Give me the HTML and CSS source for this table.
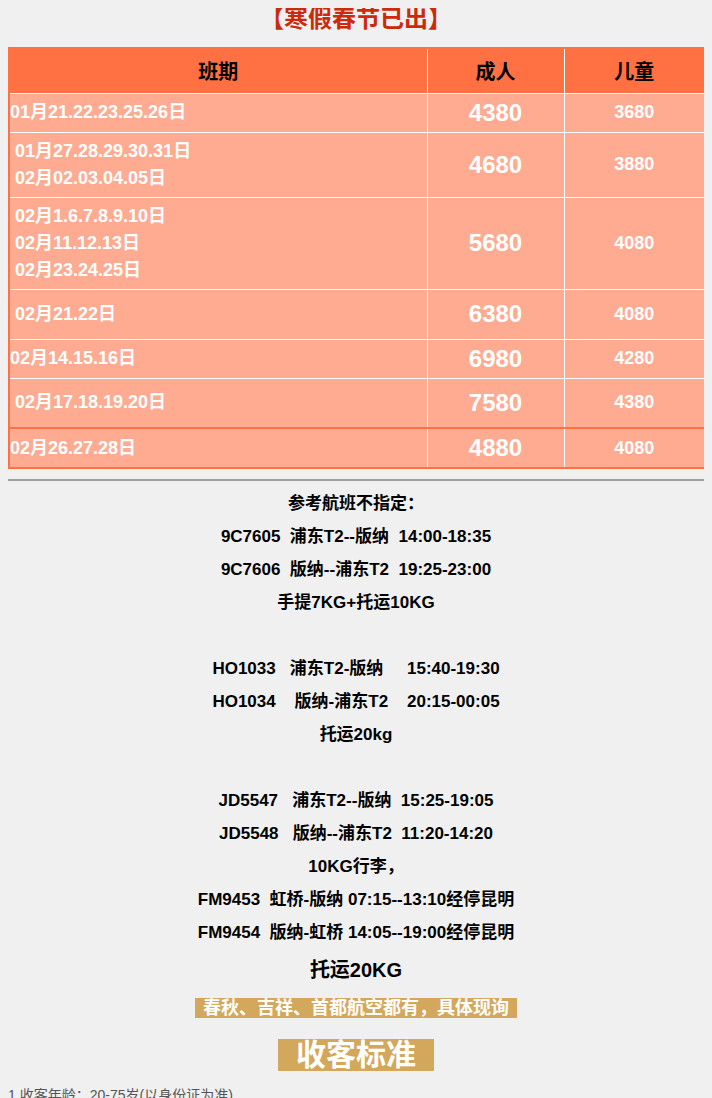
FILE: index.html
```html
<!DOCTYPE html>
<html lang="zh-CN">
<head>
<meta charset="utf-8">
<title>寒假春节已出</title>
<link rel="stylesheet" href="styles.css">
</head>
<body>
<div class="title">【寒假春节已出】</div>
<table class="price">
  <colgroup><col class="c1"><col class="c2"><col class="c3"></colgroup>
  <thead>
    <tr class="head"><th>班期</th><th>成人</th><th>儿童</th></tr>
  </thead>
  <tbody>
    <tr class="h39"><td class="date">01月21.22.23.25.26日</td><td class="adult">4380</td><td class="child">3680</td></tr>
    <tr class="h65"><td class="date ind"><div>01月27.28.29.30.31日</div><div>02月02.03.04.05日</div></td><td class="adult">4680</td><td class="child">3880</td></tr>
    <tr class="h92"><td class="date ind"><div>02月1.6.7.8.9.10日</div><div>02月11.12.13日</div><div>02月23.24.25日</div></td><td class="adult">5680</td><td class="child">4080</td></tr>
    <tr class="h50"><td class="date ind">02月21.22日</td><td class="adult">6380</td><td class="child">4080</td></tr>
    <tr class="h39"><td class="date">02月14.15.16日</td><td class="adult">6980</td><td class="child">4280</td></tr>
    <tr class="h50"><td class="date ind">02月17.18.19.20日</td><td class="adult">7580</td><td class="child">4380</td></tr>
    <tr class="h40 last"><td class="date">02月26.27.28日</td><td class="adult">4880</td><td class="child">4080</td></tr>
  </tbody>
</table>
<hr class="rule">
<div class="flights">
  <p>参考航班不指定：</p>
  <p>9C7605&nbsp;&nbsp;浦东T2--版纳&nbsp;&nbsp;14:00-18:35</p>
  <p>9C7606&nbsp;&nbsp;版纳--浦东T2&nbsp;&nbsp;19:25-23:00</p>
  <p>手提7KG+托运10KG</p>
  <p>&nbsp;</p>
  <p>HO1033&nbsp;&nbsp;&nbsp;浦东T2-版纳&nbsp;&nbsp;&nbsp;&nbsp;&nbsp;15:40-19:30</p>
  <p>HO1034&nbsp;&nbsp;&nbsp;&nbsp;版纳-浦东T2&nbsp;&nbsp;&nbsp;&nbsp;20:15-00:05</p>
  <p>托运20kg</p>
  <p>&nbsp;</p>
  <p>JD5547&nbsp;&nbsp;&nbsp;浦东T2--版纳&nbsp;&nbsp;15:25-19:05</p>
  <p>JD5548&nbsp;&nbsp;&nbsp;版纳--浦东T2&nbsp;&nbsp;11:20-14:20</p>
  <p>10KG行李，</p>
  <p>FM9453&nbsp;&nbsp;虹桥-版纳 07:15--13:10经停昆明</p>
  <p>FM9454&nbsp;&nbsp;版纳-虹桥 14:05--19:00经停昆明</p>
  <p class="big">托运20KG</p>
  <p class="tagline"><span class="gold small">春秋、吉祥、首都航空都有，具体现询</span></p>
  <p class="tagline2"><span class="gold large">收客标准</span></p>
</div>
<p class="note">1.收客年龄：20-75岁(以身份证为准)</p>
</body>
</html>
```
FILE: styles.css
```css
body {
  margin: 8px;
  background: #f0f0f0;
  font-family: "Liberation Sans", "Noto Sans CJK SC", sans-serif;
  color: #000;
}
.title {
  text-align: center;
  color: #cc2a0a;
  font-size: 24px;
  font-weight: bold;
  line-height: 22px;
  margin-bottom: 17px;
}
.price {
  width: 696px;
  border-collapse: collapse;
  border: 2px solid #ff7043;
  background: #ffab91;
  table-layout: fixed;
}
.c1 { width: 418px; }
.c2 { width: 137px; }
.c3 { width: 141px; }
.price th, .price td {
  border: 1px solid #fff;
  padding: 0;
  font-weight: bold;
  vertical-align: middle;
}
.head {
  background: #ff7043;
  height: 45px;
}
.head th {
  font-size: 20px;
  color: #000;
  text-align: center;
  border-top: 2px solid #ff7043;
}
.price td { color: #fff; }
.date {
  font-size: 18px;
  text-align: left;
  line-height: 27px;
}
.ind { padding-left: 5px !important; }
.adult { font-size: 24px; text-align: center; }
.child { font-size: 18px; text-align: center; }
.h39 { height: 39px; }
.h40 { height: 40px; }
.h50 { height: 50px; }
.h65 { height: 65px; }
.h92 { height: 92px; }
.last td { border-top: 2px solid #ff7043; }
.last td:first-child { border-left: 2px solid #ff7043; }
.rule {
  border: 0;
  height: 2px;
  background: #a0a0a0;
  margin: 10px 0 6px;
}
.flights {
  text-align: center;
  font-weight: bold;
  font-size: 17px;
}
.flights p {
  margin: 0;
  line-height: 33px;
}
.flights p.big {
  font-size: 20px;
  line-height: 43px;
}
.flights p.tagline {
  margin-top: 6px;
  line-height: 20px;
}
.flights p.tagline2 {
  margin-top: 21px;
  line-height: 32px;
}
.gold {
  display: inline-block;
  background: #d3a85d;
  color: #fff;
  vertical-align: top;
}
.gold.small {
  font-size: 18px;
  line-height: 20px;
  padding: 0 8px;
}
.gold.large {
  font-size: 30px;
  line-height: 32px;
  padding: 0 18px;
}
.note {
  margin: 14px 0 0;
  font-size: 14px;
  color: #555;
  line-height: 20px;
}
```
